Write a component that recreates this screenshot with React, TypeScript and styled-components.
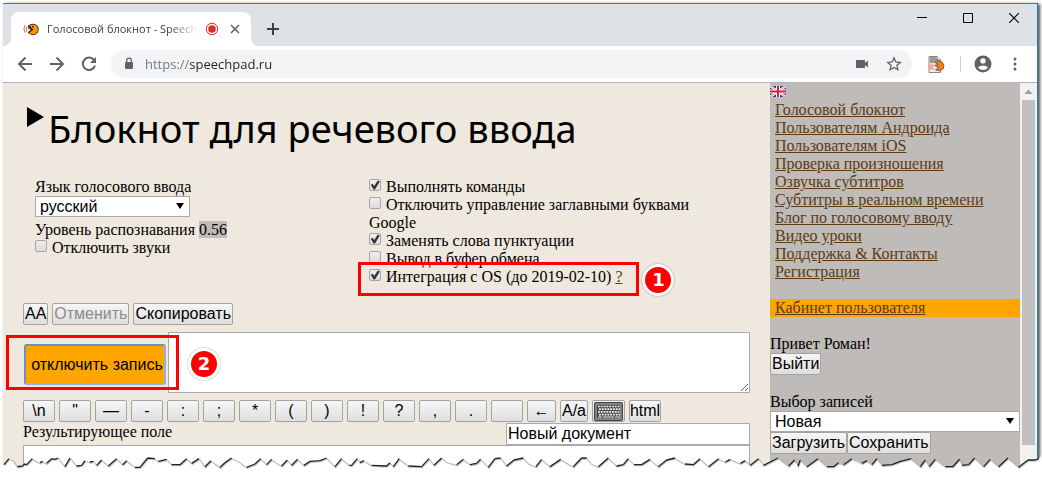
import React from "react";
import styled, { createGlobalStyle, css } from "styled-components";

const sans = `"Liberation Sans", Arial, sans-serif`;
const serif = `"Liberation Serif", "Times New Roman", serif`;
const ui = `"Open Sans", "Noto Sans", sans-serif`;

const GlobalStyle = createGlobalStyle`
  * { box-sizing: border-box; }
  body { margin: 0; background: #fff; font: 16px/18px ${serif}; color: #000; }
  button, input, select, textarea { font: 16px/18px ${sans}; color: #000; margin: 0; }
  svg { display: block; flex: none; }
`;

const Screen = styled.div`
  position: relative;
  padding: 3px 4px 9px 3px;
  overflow: hidden;
`;

const BrowserWindow = styled.div`
  border-top: 1px solid #2a7fc4;
  border-right: 1px solid #2a7fc4;
  box-shadow: 2px 1px 3px rgba(0, 0, 0, 0.7);
`;

/* Browser chrome */

const TabStrip = styled.div`
  display: flex;
  align-items: flex-start;
  height: 42px;
  padding-left: 8px;
  background: #dee1e6;
`;

const Tab = styled.div`
  position: relative;
  display: flex;
  align-items: center;
  width: 240px;
  height: 34px;
  margin-top: 8px;
  padding: 0 0 0 12px;
  border-radius: 8px 8px 0 0;
  background: #fff;

  &::before,
  &::after {
    content: "";
    position: absolute;
    bottom: 0;
    width: 8px;
    height: 8px;
  }
  &::before {
    left: -8px;
    background: radial-gradient(circle at 0 0, transparent 8px, #fff 8px);
  }
  &::after {
    right: -8px;
    background: radial-gradient(circle at 100% 0, transparent 8px, #fff 8px);
  }
`;

const TabTitle = styled.span`
  flex: 1;
  margin: 0 6px 0 8px;
  white-space: nowrap;
  font: 11px/18px ${ui};
  color: #3c4043;
  mask-image: linear-gradient(to right, #000 80%, transparent);
`;

const IconButton = styled.button<{ $w?: number }>`
  display: flex;
  align-items: center;
  justify-content: center;
  flex: none;
  width: ${(p) => p.$w ?? 20}px;
  height: 20px;
  padding: 0;
  border: 0;
  background: none;
`;

const NewTab = styled(IconButton)`
  margin: 15px 0 0 12px;
`;

const WindowButtons = styled.div`
  display: flex;
  gap: 26px;
  margin: 4px 13px 0 auto;
`;

const Toolbar = styled.div`
  display: flex;
  align-items: center;
  height: 37px;
  padding: 0 12px;
  border-bottom: 1px solid #b4b4b4;
  background: #fff;
`;

const NavButtons = styled.div`
  display: flex;
  gap: 12px;
  margin-right: 12px;
`;

const Omnibox = styled.div`
  display: flex;
  align-items: center;
  flex: 1;
  height: 28px;
  padding: 0 8px 0 12px;
  border-radius: 14px;
  background: #f1f3f4;
`;

/* The scheme is greyed, the host is dark */
const Address = styled.input`
  flex: 1;
  min-width: 0;
  height: 20px;
  margin-left: 10px;
  padding: 0;
  border: 0;
  font: 13px/20px ${ui};
  color: transparent;
  background: linear-gradient(to right, #70757a 45px, #202124 45px);
  background-clip: text;
`;

const OmniboxActions = styled.div`
  display: flex;
  gap: 12px;
`;

const ExtensionButton = styled(IconButton)`
  margin-left: 14px;
`;

const Divider = styled.div`
  width: 1px;
  height: 16px;
  margin: 0 12px 0 14px;
  background: #c9ccd0;
`;

const MenuButtons = styled.div`
  display: flex;
  gap: 12px;
`;

/* Page */

const Page = styled.div`
  display: flex;
  height: 385px;
  overflow: hidden;
  background: #efe8df;
`;

const Main = styled.main`
  flex: 1;
  min-width: 0;
  padding: 20px 20px 0;
`;

const Heading = styled.div`
  display: flex;
  align-items: flex-start;
  margin-bottom: 27px;
  padding: 4px 0 0 4px;
`;

const Title = styled.h1`
  margin: -4px 0 0 4px;
  font: 38px/50px "Noto Sans", "Open Sans", sans-serif;
  height: 48px;
`;

const Settings = styled.div`
  display: grid;
  grid-template-columns: 1fr 1fr;
  margin: 0 47px 17px 12px;
`;

const SettingLabel = styled.label`
  display: block;
`;

const SelectBox = styled.div<{ $w: string }>`
  position: relative;
  width: ${(p) => p.$w};
  height: 21px;

  &::after {
    content: "";
    position: absolute;
    right: 6px;
    top: 7px;
    border: solid transparent;
    border-width: 6px 4px 0;
    border-top-color: #000;
    pointer-events: none;
  }
`;

const Select = styled.select`
  display: block;
  appearance: none;
  width: 100%;
  height: 21px;
  padding: 0 4px;
  border: 1px solid #a9a9a9;
  border-radius: 0;
  background: #fff;
`;

const Level = styled.div`
  margin-top: 4px;
  span { padding: 0; background: #c0bcb8; }
`;

const Option = styled.div`
  a { color: #5c3a14; }
`;

const FramedOption = styled(Option)`
  position: relative;
  width: max-content;
`;

const Checkbox = styled.input.attrs({ type: "checkbox" })`
  appearance: none;
  position: relative;
  width: 12px;
  height: 12px;
  margin: 0 5px 0 0;
  border: 1px solid #a6a6a6;
  border-radius: 2px;
  background: linear-gradient(#eee, #dcdcdc);
  vertical-align: 1px;

  &:checked::after {
    content: "";
    position: absolute;
    inset: 0;
    background: #333;
    clip-path: polygon(8% 48%, 26% 38%, 42% 60%, 78% 4%, 98% 14%, 50% 96%, 36% 96%);
  }
`;

const Row = styled.div`
  display: flex;
  gap: 4px;
`;

const buttonFace = css`
  height: 22px;
  padding: 0 1px;
  border: 1px solid #a3a3a3;
  border-radius: 2px;
  background: linear-gradient(#f6f6f6, #dedede);
  white-space: nowrap;
`;

const PushButton = styled.button`
  ${buttonFace}
  &:disabled { color: #8b8b8b; }
`;

const KeyButton = styled.button<{ $w?: number }>`
  ${buttonFace}
  display: flex;
  align-items: center;
  justify-content: center;
  flex: none;
  width: ${(p) => p.$w ?? 32}px;
  padding: 0;
`;

const InputRow = styled.div`
  display: flex;
  align-items: center;
  margin: 7px 0;
`;

const RecordCell = styled.div`
  position: relative;
  flex: none;
  width: 145px;
  padding: 4px 2px 0 1px;
`;

const RecordButton = styled.button`
  width: 142px;
  height: 41px;
  padding: 0 0 0 4px;
  border: 2px solid;
  border-color: #6f8fc4 #8fb0ea #8fb0ea #6f8fc4;
  border-radius: 3px;
  background: #ffa500;
  white-space: nowrap;
`;

const Phrase = styled.textarea`
  flex: 1;
  min-width: 0;
  height: 61px;
  border: 1px solid #a9a9a9;
`;

const ResultRow = styled.div`
  display: flex;
  justify-content: space-between;
  margin-top: 1px;
`;

const DocName = styled.input`
  width: 244px;
  height: 22px;
  padding: 0 1px;
  border: 1px solid #a9a9a9;
  background: #fff;
`;

const Result = styled.textarea`
  display: block;
  width: 100%;
  height: 60px;
  border: 1px solid #a9a9a9;
`;

/* Callouts */

const Frame = styled.div<{ $inset: string }>`
  position: absolute;
  inset: ${(p) => p.$inset};
  z-index: 1;
  border: 3px solid #fe0000;
  pointer-events: none;
`;

const Badge = styled.div<{ $gap: number }>`
  position: absolute;
  top: 50%;
  left: calc(100% + ${(p) => p.$gap}px);
  width: 32px;
  height: 32px;
  margin-top: -15px;
  border: 3px solid #fff;
  border-radius: 50%;
  background: #fe0000;
  box-shadow: 0 0 2px rgba(0, 0, 0, 0.4);
  font: bold 18px/26px "DejaVu Sans", sans-serif;
  color: #fff;
  text-align: center;
`;

/* Sidebar */

const Sidebar = styled.aside`
  flex: none;
  width: 250px;
  padding-top: 3px;
  background: #bfbbb8;
`;

const SideNav = styled.nav`
  display: flex;
  flex-direction: column;
  margin: 4px 0 18px;
`;

const SideLink = styled.a<{ $current?: boolean }>`
  padding-left: 5px;
  margin-top: ${(p) => (p.$current ? 18 : 0)}px;
  background: ${(p) => (p.$current ? "#ffa500" : "none")};
  color: #5c3a14;
`;

const SideGroup = styled.div`
  margin-bottom: 18px;
`;

const SideButtons = styled.div`
  display: flex;
`;

const ScrollTrack = styled.div`
  flex: none;
  width: 17px;
  padding: 6px 2px 0;
  background: #f1f1f1;
`;

const ScrollThumb = styled.div`
  height: 345px;
  margin-top: 6px;
  background: #c1c1c1;
`;

const TornEdge = styled.svg`
  position: absolute;
  left: 0;
  bottom: 0;
  width: 100%;
  height: 25px;
`;

const tornPoints: number[][] = [
  [12,38],[27,20],[38,24],[52,44],[68,42],[72,36],[80,38],[97,20],[110,28],[120,32],[128,28],[140,34],[155,20],[165,22],[175,18],[195,44],[210,18],[230,42],[245,40],[255,26],[270,30],[280,28],[290,40],[305,24],[325,42],[350,20],[368,38],[380,26],[405,46],[420,46],[443,18],[465,20],[475,28],[500,22],[515,38],[540,38],[560,20],[575,34],[597,20],[615,44],[633,26],[660,46],[675,32],[695,18],[710,24],[740,46],[765,36],[782,20],[800,38],[815,22],[845,42],[862,24],[875,40],[893,22],[912,40],[930,28],[960,26],[980,18],[1005,44],[1025,20],[1048,40],
  [1055,40],[1072,20],[1080,32],[1092,26],[1115,40],[1160,42],[1170,32],[1180,44],[1198,20],[1225,42],[1265,44],[1287,20],[1302,40],[1325,18],[1340,30],[1370,38],[1390,22],[1410,38],[1430,34],[1442,22],[1465,46],[1485,20],[1502,18],[1520,42],[1542,24],[1570,18],[1585,34],[1608,44],[1625,22],[1650,44],[1682,22],[1720,44],[1745,18],[1760,18],[1772,34],[1795,44],[1825,18],[1850,42],[1870,38],[1885,20],[1902,38],[1925,38],[1950,22],[1975,44],[2000,24],[2025,18],[2055,36],[2080,38],
  [2100,20],[2126,44],[2156,20],[2176,30],[2191,22],[2221,34],[2236,26],[2251,40],[2276,20],[2291,40],[2334,18],[2366,42],[2384,24],[2394,42],[2401,24],[2421,44],[2454,20],[2481,44],[2501,44],[2516,32],[2531,38],[2556,20],[2586,34],[2601,26],[2616,38],[2631,20],[2646,40],[2676,38],[2701,28],[2734,20],[2761,44],[2776,24],[2788,44],[2806,22],[2836,44],[2858,44],[2879,22],[2886,40],[2906,38],[2924,18],[2951,44],[2971,22],[2996,44],[3024,18],[3056,46],[3084,24],[3106,24],[3116,20],
];

function Torn() {
  const line = tornPoints.map((p) => p.join(" ")).join(" L ");
  const rising = tornPoints
    .slice(1)
    .map((p, i) => [tornPoints[i], p])
    .filter(([a, b]) => b[1] <= a[1] + 2)
    .map(([a, b]) => `M ${a.join(" ")} L ${b.join(" ")}`)
    .join(" ");
  return (
    <TornEdge viewBox="0 0 3126 75" preserveAspectRatio="none" aria-hidden="true">
      <path d={`M 0 75 L 0 38 L ${line} L 3126 10 L 3126 75 Z`} fill="#fff" />
      <path d={`M ${line}`} fill="none" stroke="#999" strokeOpacity="0.6" strokeWidth="4" transform="translate(2 3)" />
      <path d={rising} fill="none" stroke="#222" strokeWidth="4" />
    </TornEdge>
  );
}

function SpeechpadIcon() {
  return (
    <svg width="16" height="13" viewBox="0 0 17 13">
      <path d="M2 2Q0 6 2 10M4 3.500Q3 6 4 9" fill="none" stroke="#e8604a" strokeWidth="1" />
      <path d="M6 2.500Q8 .7 11 .9Q16 1.500 16.200 6Q16 11.500 11 12Q8 12 6 9.800L10 7L5.500 5L8.500 4Z" fill="#ff9800" stroke="#3a2208" strokeWidth="1" />
      <path d="M5.500 2.500L10 6.500L5.500 10" fill="none" stroke="#222" strokeWidth="1.300" />
      <circle cx="10.500" cy="3.500" r=".9" fill="#222" />
    </svg>
  );
}

function ExtensionIcon() {
  return (
    <svg width="17" height="17" viewBox="0 0 17 17">
      <path d="M1 .5H9L12.500 4V16.500H1Z" fill="#eee" stroke="#888" />
      <path d="M2 2H8M2 4H10M2 6H8" stroke="#444" strokeWidth="1.200" />
      <path d="M9 .5V4H12.500" fill="#fff" stroke="#666" />
      <path d="M2 8Q1 10.500 2.500 13.500M4.500 8Q3.500 10.500 5 13.500" fill="none" stroke="#f5a08a" strokeWidth="2" />
      <path d="M7 6.500Q10 3.500 14 6Q17.500 9.500 15 13Q12 16 7.500 14L10.500 11L6.500 9.500L10 8.500Z" fill="#f08020" stroke="#7a4510" strokeWidth=".8" />
    </svg>
  );
}

function KeyboardIcon() {
  return (
    <svg width="29" height="19" viewBox="0 0 29 19">
      <rect x=".5" y=".5" width="28" height="18" rx="1" fill="#555" stroke="#444" />
      <rect x="2" y="2" width="25" height="15" fill="#4a4a4a" stroke="#ccc" strokeWidth=".8" />
      <path d="M4 4.500H26M5 7.200H26M4 9.900H26M5 12.600H26" stroke="#f5f5f5" strokeWidth="1.700" strokeDasharray="1.800 1" />
      <path d="M4 15H8M9 15H20M21 15H26" stroke="#eee" strokeWidth="1.200" />
    </svg>
  );
}

const stroke = { fill: "none", stroke: "#5f6368", strokeWidth: 2 };

const keys: { text: string; label?: string; width?: number }[] = [
  { text: "\\n" }, { text: '"' }, { text: "—" }, { text: "-" }, { text: ":" },
  { text: ";" }, { text: "*" }, { text: "(" }, { text: ")" }, { text: "!" },
  { text: "?" }, { text: "," }, { text: "." }, { text: "", label: "Пробел" },
  { text: "←", width: 29 }, { text: "A/a", width: 28 },
];

const links = [
  "Голосовой блокнот", "Пользователям Андроида", "Пользователям iOS",
  "Проверка произношения", "Озвучка субтитров", "Субтитры в реальном времени",
  "Блог по голосовому вводу", "Видео уроки", "Поддержка & Контакты", "Регистрация",
];

function Chrome() {
  return (
    <header>
      <TabStrip>
        <Tab>
          <SpeechpadIcon />
          <TabTitle>Голосовой блокнот - Speech</TabTitle>
          <svg width="14" height="14" viewBox="0 0 14 14">
            <circle cx="7" cy="7" r="5.700" fill="none" stroke="#d93025" strokeWidth="1" />
            <circle cx="7" cy="7" r="3.800" fill="#d93025" />
          </svg>
          <IconButton aria-label="Закрыть вкладку" $w={32}>
            <svg width="10" height="10" viewBox="0 0 10 10"><path d="M1 1L9 9M9 1L1 9" {...stroke} strokeWidth={1.6} /></svg>
          </IconButton>
        </Tab>
        <NewTab aria-label="Новая вкладка">
          <svg width="12" height="12" viewBox="0 0 12 12"><path d="M6 0V12M0 6H12" {...stroke} stroke="#3c4043" /></svg>
        </NewTab>
        <WindowButtons>
          <IconButton aria-label="Свернуть"><svg width="10" height="10" viewBox="0 0 10 10"><path d="M0 4.500H10" stroke="#000" /></svg></IconButton>
          <IconButton aria-label="Развернуть"><svg width="10" height="10" viewBox="0 0 10 10"><path d="M.5 .5H9.500V9.500H.5Z" fill="none" stroke="#000" /></svg></IconButton>
          <IconButton aria-label="Закрыть"><svg width="10" height="10" viewBox="0 0 10 10"><path d="M0 0L10 10M10 0L0 10" stroke="#000" strokeWidth="1.200" /></svg></IconButton>
        </WindowButtons>
      </TabStrip>
      <Toolbar>
        <NavButtons>
          <IconButton aria-label="Назад"><svg width="16" height="16" viewBox="0 0 16 16"><path d="M15 8H2.500M8.500 1.500L2 8L8.500 14.500" {...stroke} /></svg></IconButton>
          <IconButton aria-label="Вперёд"><svg width="16" height="16" viewBox="0 0 16 16"><path d="M1 8H13.500M7.500 1.500L14 8L7.500 14.500" {...stroke} /></svg></IconButton>
          <IconButton aria-label="Обновить"><svg width="16" height="16" viewBox="0 0 16 16"><path d="M13.300 4.500A6.200 6.200 0 1 0 14 9.500" {...stroke} /><path d="M15 1V7H9Z" fill="#5f6368" /></svg></IconButton>
        </NavButtons>
        <Omnibox>
          <svg width="12" height="14" viewBox="0 0 12 14"><rect x="2" y="5" width="8" height="7" rx="1" fill="#5f6368" /><path d="M3.700 5.500V3.500A2.300 2.300 0 0 1 8.300 3.500V5.500" fill="none" stroke="#5f6368" strokeWidth="1.300" /></svg>
          <Address aria-label="Адрес" defaultValue="https://speechpad.ru" />
          <OmniboxActions>
            <IconButton aria-label="Камера"><svg width="14" height="10" viewBox="0 0 14 10"><path d="M1 1H10V4L13 1.500V8.500L10 6V9H1Z" fill="#5f6368" /></svg></IconButton>
            <IconButton aria-label="Закладка"><svg width="16" height="16" viewBox="0 0 16 16"><path d="M8 1.800L9.800 6L14.300 6.400L10.900 9.300L11.900 13.700L8 11.400L4.100 13.700L5.100 9.300L1.700 6.400L6.200 6Z" fill="none" stroke="#5f6368" strokeWidth="1.300" /></svg></IconButton>
          </OmniboxActions>
        </Omnibox>
        <ExtensionButton aria-label="Speechpad"><ExtensionIcon /></ExtensionButton>
        <Divider />
        <MenuButtons>
          <IconButton aria-label="Профиль"><svg width="18" height="18" viewBox="0 0 18 18"><path fillRule="evenodd" d="M9 .5A8.500 8.500 0 1 1 9 17.500A8.500 8.500 0 1 1 9 .5ZM9 3.200A2.700 2.700 0 1 0 9 8.600A2.700 2.700 0 1 0 9 3.200ZM3.900 12.500Q6 15 9 15Q12 15 14.100 12.500Q12 10.500 9 10.500Q6 10.500 3.900 12.500Z" fill="#5f6368" /></svg></IconButton>
          <IconButton aria-label="Меню"><svg width="4" height="14" viewBox="0 0 4 14"><g fill="#5f6368"><circle cx="2" cy="2" r="1.500" /><circle cx="2" cy="7" r="1.500" /><circle cx="2" cy="12" r="1.500" /></g></svg></IconButton>
        </MenuButtons>
      </Toolbar>
    </header>
  );
}

export default function App() {
  return (
    <Screen>
      <GlobalStyle />
      <BrowserWindow>
        <Chrome />
        <Page>
          <Main>
            <Heading>
              <svg width="17" height="20" viewBox="0 0 17 20"><path d="M0 0L17 10L0 20Z" /></svg>
              <Title>Блокнот для речевого ввода</Title>
            </Heading>
            <Settings>
              <div>
                <SettingLabel htmlFor="lang">Язык голосового ввода</SettingLabel>
                <SelectBox $w="155px"><Select id="lang"><option>русский</option></Select></SelectBox>
                <Level>Уровень распознавания <span>0.56</span></Level>
                <Option><Checkbox id="mute" /><label htmlFor="mute">Отключить звуки</label></Option>
              </div>
              <div>
                <Option><Checkbox id="cmd" defaultChecked /><label htmlFor="cmd">Выполнять команды</label></Option>
                <Option><Checkbox id="caps" /><label htmlFor="caps">Отключить управление заглавными буквами Google</label></Option>
                <Option><Checkbox id="punct" defaultChecked /><label htmlFor="punct">Заменять слова пунктуации</label></Option>
                <Option><Checkbox id="clip" /><label htmlFor="clip">Вывод в буфер обмена</label></Option>
                <FramedOption>
                  <Checkbox id="os" defaultChecked /><label htmlFor="os">Интеграция с OS (до 2019-02-10)</label> <a href="#os-help">?</a>
                  <Frame $inset="-6px -17px -10px -11px"><Badge $gap={6}>1</Badge></Frame>
                </FramedOption>
              </div>
            </Settings>
            <Row>
              <PushButton>AA</PushButton>
              <PushButton disabled>Отменить</PushButton>
              <PushButton>Скопировать</PushButton>
            </Row>
            <InputRow>
              <RecordCell>
                <RecordButton>отключить запись</RecordButton>
                <Frame $inset="-5px -11px -5px -17px"><Badge $gap={12}>2</Badge></Frame>
              </RecordCell>
              <Phrase aria-label="Поле ввода" />
            </InputRow>
            <Row>
              {keys.map((k, i) => (
                <KeyButton key={i} $w={k.width} aria-label={k.label}>{k.text}</KeyButton>
              ))}
              <KeyButton $w={33} aria-label="Клавиатура"><KeyboardIcon /></KeyButton>
              <KeyButton>html</KeyButton>
            </Row>
            <ResultRow>
              <label htmlFor="result">Результирующее поле</label>
              <DocName aria-label="Имя документа" defaultValue="Новый документ" />
            </ResultRow>
            <Result id="result" />
          </Main>
          <Sidebar>
            <svg width="16" height="11" viewBox="0 0 16 11">
              <rect width="16" height="11" fill="#2b3f94" />
              <path d="M0 0L16 11M16 0L0 11" stroke="#fff" strokeWidth="2.400" />
              <path d="M0 0L16 11M16 0L0 11" stroke="#d8304a" strokeWidth=".6" />
              <path d="M8 0V11M0 5.500H16" stroke="#fff" strokeWidth="4" />
              <path d="M8 0V11M0 5.500H16" stroke="#d81e34" strokeWidth="2" />
            </svg>
            <SideNav>
              {links.map((l) => <SideLink key={l} href="#page">{l}</SideLink>)}
              <SideLink $current href="#cabinet">Кабинет пользователя</SideLink>
            </SideNav>
            <SideGroup>
              <div>Привет Роман!</div>
              <PushButton>Выйти</PushButton>
            </SideGroup>
            <SettingLabel htmlFor="note">Выбор записей</SettingLabel>
            <SelectBox $w="100%"><Select id="note"><option>Новая</option></Select></SelectBox>
            <SideButtons>
              <PushButton>Загрузить</PushButton>
              <PushButton>Сохранить</PushButton>
            </SideButtons>
          </Sidebar>
          <ScrollTrack>
            <svg width="13" height="5" viewBox="0 0 13 5"><path d="M2.500 5L6.500 .5L10.500 5Z" fill="#a0a0a0" /></svg>
            <ScrollThumb />
          </ScrollTrack>
        </Page>
      </BrowserWindow>
      <Torn />
    </Screen>
  );
}
